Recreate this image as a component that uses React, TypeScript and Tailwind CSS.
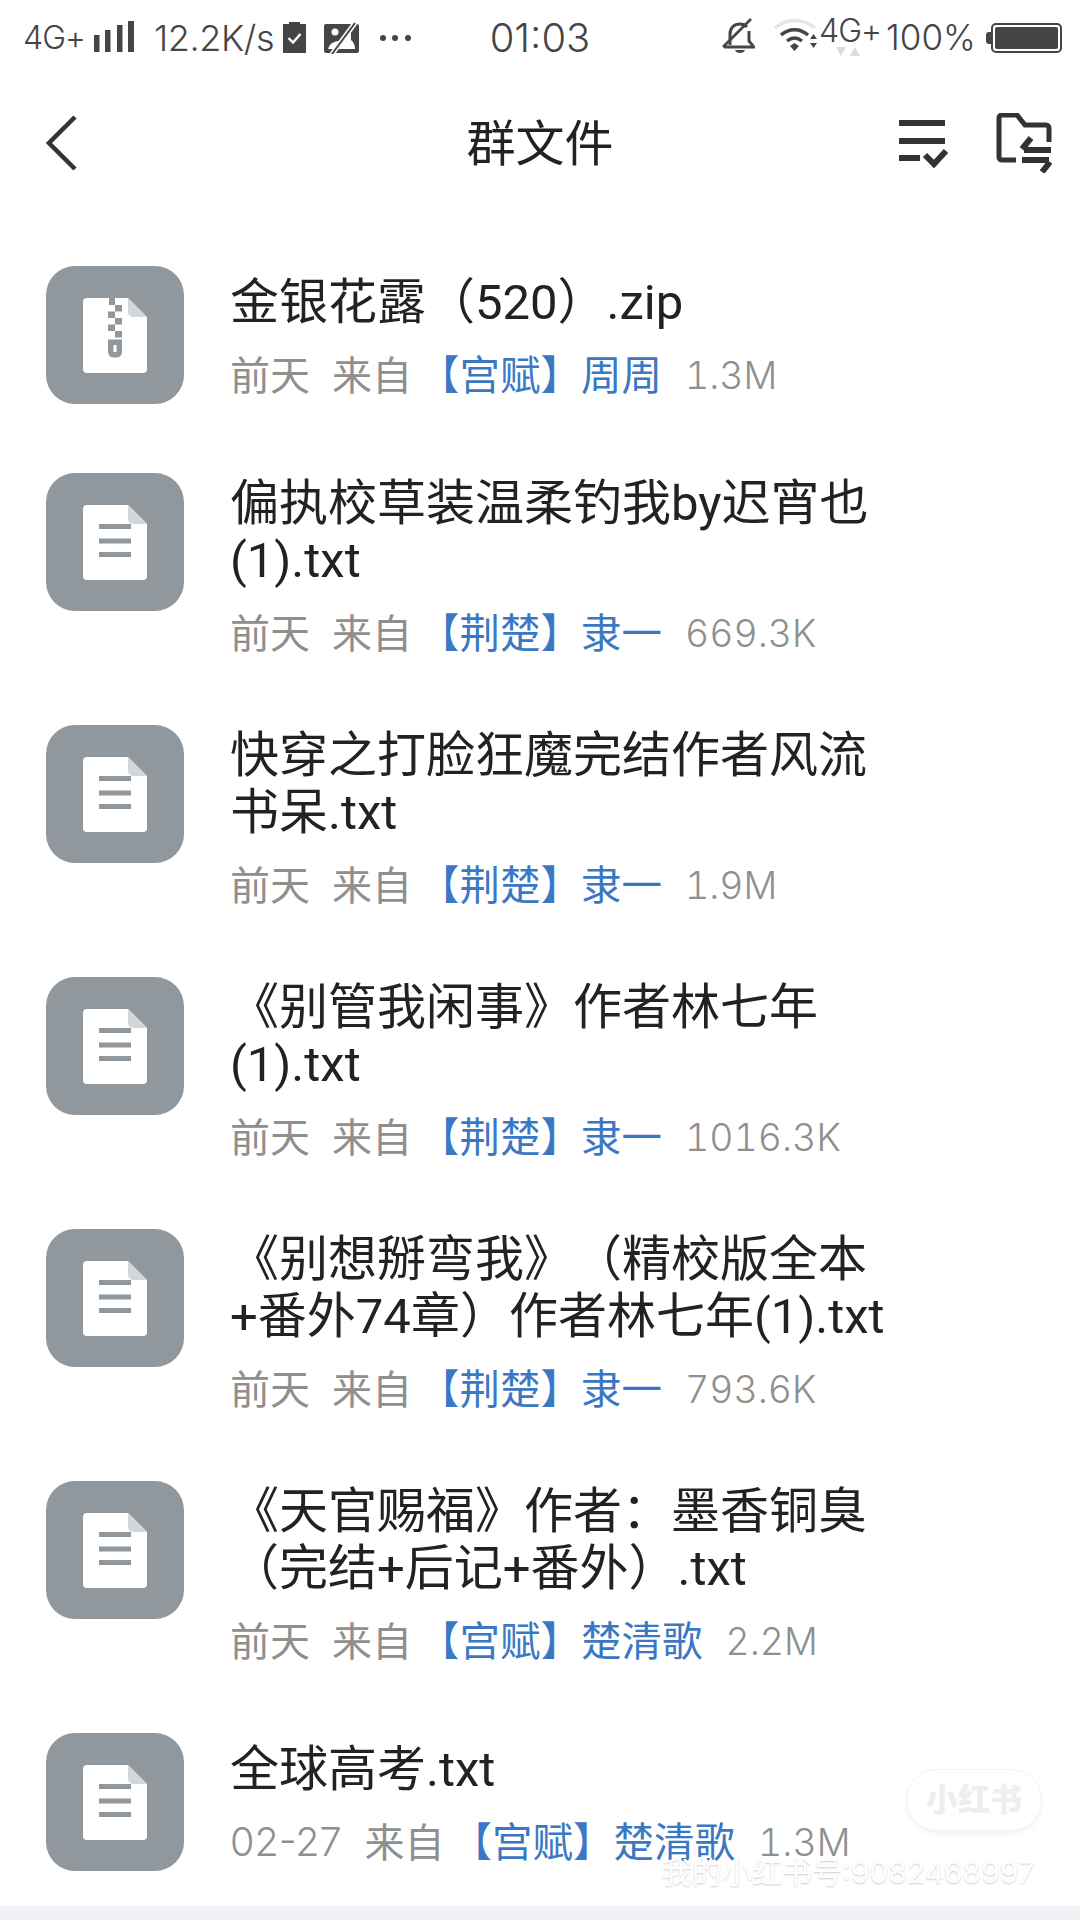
const FONT = "[font-family:Inter,'Noto_Sans_CJK_SC',sans-serif] [text-spacing-trim:space-all]";

type Row = { zip?: boolean; lines: string[]; date: string; group: string; who: string; size: string };

const rows: Row[] = [
  { zip: true, lines: ["金银花露（520）.zip"], date: "前天", group: "【宫赋】", who: "周周", size: "1.3M" },
  { lines: ["偏执校草装温柔钓我by迟宵也", "(1).txt"], date: "前天", group: "【荆楚】", who: "隶一", size: "669.3K" },
  { lines: ["快穿之打脸狂魔完结作者风流", "书呆.txt"], date: "前天", group: "【荆楚】", who: "隶一", size: "1.9M" },
  { lines: ["《别管我闲事》作者林七年", "(1).txt"], date: "前天", group: "【荆楚】", who: "隶一", size: "1016.3K" },
  { lines: ["《别想掰弯我》（精校版全本", "+番外74章）作者林七年(1).txt"], date: "前天", group: "【荆楚】", who: "隶一", size: "793.6K" },
  { lines: ["《天官赐福》作者：墨香铜臭", "（完结+后记+番外）.txt"], date: "前天", group: "【宫赋】", who: "楚清歌", size: "2.2M" },
  { lines: ["全球高考.txt"], date: "02-27", group: "【宫赋】", who: "楚清歌", size: "1.3M" },
];

function FileIcon({ zip }: { zip?: boolean }) {
  const g = "#90979d";
  return (
    <svg width="138" height="138" viewBox="0 0 138 138" className="shrink-0">
      <rect width="138" height="138" rx="29" fill={g} />
      <path d="M41 32H82L101 51V103a4 4 0 0 1-4 4H41a4 4 0 0 1-4-4V36a4 4 0 0 1 4-4Z" fill="#fff" />
      <path d="M82 32L101 51H87a5 5 0 0 1-5-5Z" fill="#d3d6d8" />
      {zip ? (
        <g fill={g}>
          <rect x="63" y="32" width="6" height="7" />
          <rect x="69" y="39" width="7" height="6.5" />
          <rect x="62" y="45.5" width="7" height="6.5" />
          <rect x="69" y="52" width="7" height="6.5" />
          <rect x="62" y="58.5" width="7" height="6.5" />
          <rect x="69" y="65" width="7" height="6.5" />
          <path d="M62 73.5H76V86a5.5 5.5 0 0 1-5.5 5.5H67.5A5.5 5.5 0 0 1 62 86Z" />
          <rect x="67.5" y="79" width="3" height="7" fill="#fff" />
        </g>
      ) : (
        <g fill={g}>
          <rect x="53" y="51" width="32" height="5" />
          <rect x="53" y="65.5" width="32" height="5" />
          <rect x="53" y="79" width="32" height="5" />
        </g>
      )}
    </svg>
  );
}

function LeftStatus() {
  return (
    <div className="flex items-center text-[#454545]">
      <span className="ml-[5px] text-[32px] tracking-[-1px] leading-none w-[71px] font-light">4G+</span>
      <svg width="42" height="32" viewBox="0 0 42 32" fill="#454545" className="-mt-[2px]">
        <rect x="0" y="14" width="5.5" height="17" />
        <rect x="11" y="9" width="5.5" height="22" />
        <rect x="23" y="4" width="5.5" height="27" />
        <rect x="34" y="0" width="6" height="31" />
      </svg>
      <span className="ml-[18px] text-[36px] leading-none w-[129px] tracking-[-0.4px] font-light whitespace-nowrap">12.2K/s</span>
      <svg width="23" height="32" viewBox="0 0 23 32" className="-mt-[1px]">
        <path d="M0 3H6V1H17V3H23V32H0Z" fill="#454545" />
        <path d="M5.5 17L10 21.5L17.5 13" stroke="#fff" strokeWidth="2.4" fill="none" />
      </svg>
      <svg width="36" height="32" viewBox="0 0 36 32" className="ml-[18px]">
        <rect x="0" y="2" width="35" height="29" rx="2" fill="#454545" />
        <circle cx="11" cy="10" r="3.5" fill="#fff" />
        <path d="M4 27C6 20 12 19 16 19L22 10H27V18C30 20 31 24 31 27Z" fill="#fff" />
        <path d="M8 32L31 1" stroke="#fff" strokeWidth="5" />
        <path d="M8 32L31 1" stroke="#454545" strokeWidth="2" />
      </svg>
      <svg width="34" height="8" viewBox="0 0 34 8" fill="#454545" className="ml-[19px]">
        <circle cx="4" cy="4" r="3" />
        <circle cx="16" cy="4" r="3" />
        <circle cx="29" cy="4" r="3" />
      </svg>
    </div>
  );
}

function RightStatus() {
  return (
    <div className="flex items-center justify-end text-[#454545]">
      <svg width="36" height="36" viewBox="0 0 36 36" fill="none" className="-mt-[3px]">
        <path d="M8 27V16C8 10 12 6 18 6C21 6 23 7 25 9" stroke="#454545" strokeWidth="3" />
        <path d="M27 13V23L31 28" stroke="#454545" strokeWidth="3" />
        <path d="M2 29H33" stroke="#454545" strokeWidth="3" />
        <path d="M13 32H23C22 36 14 36 13 32Z" fill="#454545" />
        <path d="M1 29L29 1" stroke="#454545" strokeWidth="2.6" />
      </svg>
      <svg width="46" height="36" viewBox="0 0 46 36" className="ml-[15px] -mt-[3px]" fill="none">
        <path d="M2 10C13 0 30 0 42 10" stroke="#e6e6e6" strokeWidth="3.5" />
        <path d="M8 17C16 10 27 10 35 17" stroke="#454545" strokeWidth="3.5" />
        <path d="M14 23C19 19 24 19 29 23" stroke="#454545" strokeWidth="3.5" />
        <path d="M17 28L21.5 25L26 28L21.5 33Z" fill="#454545" />
        <path d="M37 21L40.5 16L44 21ZM37 25L40.5 30L44 25Z" fill="#454545" />
      </svg>
      <div className="relative w-[67px] h-[40px]">
        <span className="absolute left-0 -top-[3px] text-[32px] leading-none tracking-[-1px] font-light">4G+</span>
        <svg width="40" height="12" viewBox="0 0 40 12" fill="#dcdcdc" className="absolute left-[17px] top-[29px]">
          <path d="M0 0H10L5 9Z" />
          <path d="M14 9L19 0L24 9Z" />
        </svg>
      </div>
      <span className="text-[35px] leading-none w-[100px] font-light">100%</span>
      <div className="flex items-center">
        <div className="w-[5px] h-[12px] bg-[#454545] rounded-l-[3px]" />
        <div className="w-[71px] h-[30px] border-[2px] border-[#454545] rounded-[5px] p-[2px]">
          <div className="h-full w-full bg-[#454545] rounded-[2px]" />
        </div>
      </div>
    </div>
  );
}

function Meta({ r }: { r: Row }) {
  return (
    <div className="flex items-center h-[45px] mt-[22px] text-[40px] leading-[45px] text-[#8f8f8f] whitespace-nowrap">
      <span className={r.date === "前天" ? "mr-[22px]" : "mr-[23px] text-[39.5px] font-light"}>{r.date}</span>
      <span className="mr-[7px]">来自</span>
      <span className="text-[#3a78c4] mr-[23px] text-[40.5px]">
        {r.group}
        {r.who}
      </span>
      <span className="text-[37.5px] font-light tabular-nums">{r.size}</span>
    </div>
  );
}

export default function App() {
  return (
    <div className={`relative w-[1080px] h-[1920px] overflow-hidden bg-white flex flex-col ${FONT}`}>
      <div className="grid grid-cols-[1fr_auto_1fr] items-center h-[75px] px-[18px]">
        <LeftStatus />
        <span className="text-[40px] leading-none text-[#454545] text-center font-light">01:03</span>
        <RightStatus />
      </div>

      <div className="relative flex items-center justify-between h-[136px] pl-[46px] pr-[28px]">
        <svg width="32" height="56" viewBox="0 0 32 56" fill="none">
          <path d="M29 2L3 28L29 54" stroke="#333" strokeWidth="4.5" strokeLinejoin="miter" />
        </svg>
        <span className="absolute left-0 right-0 text-center text-[49px] leading-none text-[#222]">群文件</span>
        <div className="flex items-center gap-[48px]">
          <svg width="50" height="50" viewBox="0 0 50 50" fill="#333">
            <rect x="1" y="2" width="46" height="6" />
            <rect x="1" y="20" width="46" height="6" />
            <rect x="1" y="37" width="21" height="6" />
            <path d="M27 37L36 46L48 33" fill="none" stroke="#333" strokeWidth="6" />
          </svg>
          <svg width="56" height="60" viewBox="0 0 56 60" fill="none" stroke="#333" strokeWidth="5">
            <path d="M20 47H6a3 3 0 0 1-3-3V5a3 3 0 0 1 3-3H21L29 12H50a3 3 0 0 1 3 3V29" />
            <path d="M28 37H55M35 25L26 36" strokeWidth="6" />
            <path d="M26 47H53M46 59L54 49" strokeWidth="6" />
          </svg>
        </div>
      </div>

      <div className="flex flex-col gap-[69px] pt-[55px]">
        {rows.map((r, i) => (
          <div key={i} className="flex items-start pl-[46px]">
            <FileIcon zip={r.zip} />
            <div className="ml-[46px] min-h-[138px] flex flex-col justify-center">
              <div className="pt-[2px] [font-family:Roboto,'Noto_Sans_CJK_SC',sans-serif]">
                {r.lines.map((l, j) => (
                  <div key={j} className="text-[49px] leading-[57px] text-[#222] whitespace-nowrap">
                    {l}
                  </div>
                ))}
              </div>
              <Meta r={r} />
            </div>
          </div>
        ))}
      </div>

      <div className="absolute left-0 right-0 bottom-0 h-[14px] bg-[#f1f1f5]" />

      <div className="absolute left-[906px] top-[1769px] w-[136px] h-[62px] rounded-[31px] bg-white border border-[#f3f3f3] shadow-[0_3px_5px_rgba(0,0,0,0.05)] flex items-center justify-center text-[32px] font-black text-[#eeeeee] leading-none">
        小红书
      </div>
      <div className="absolute left-[662px] top-[1855px] text-[30px] leading-[34px] text-white whitespace-nowrap [text-shadow:0_1px_2px_rgba(0,0,0,0.2)]">
        我的小红书号:9082468997
      </div>
    </div>
  );
}
